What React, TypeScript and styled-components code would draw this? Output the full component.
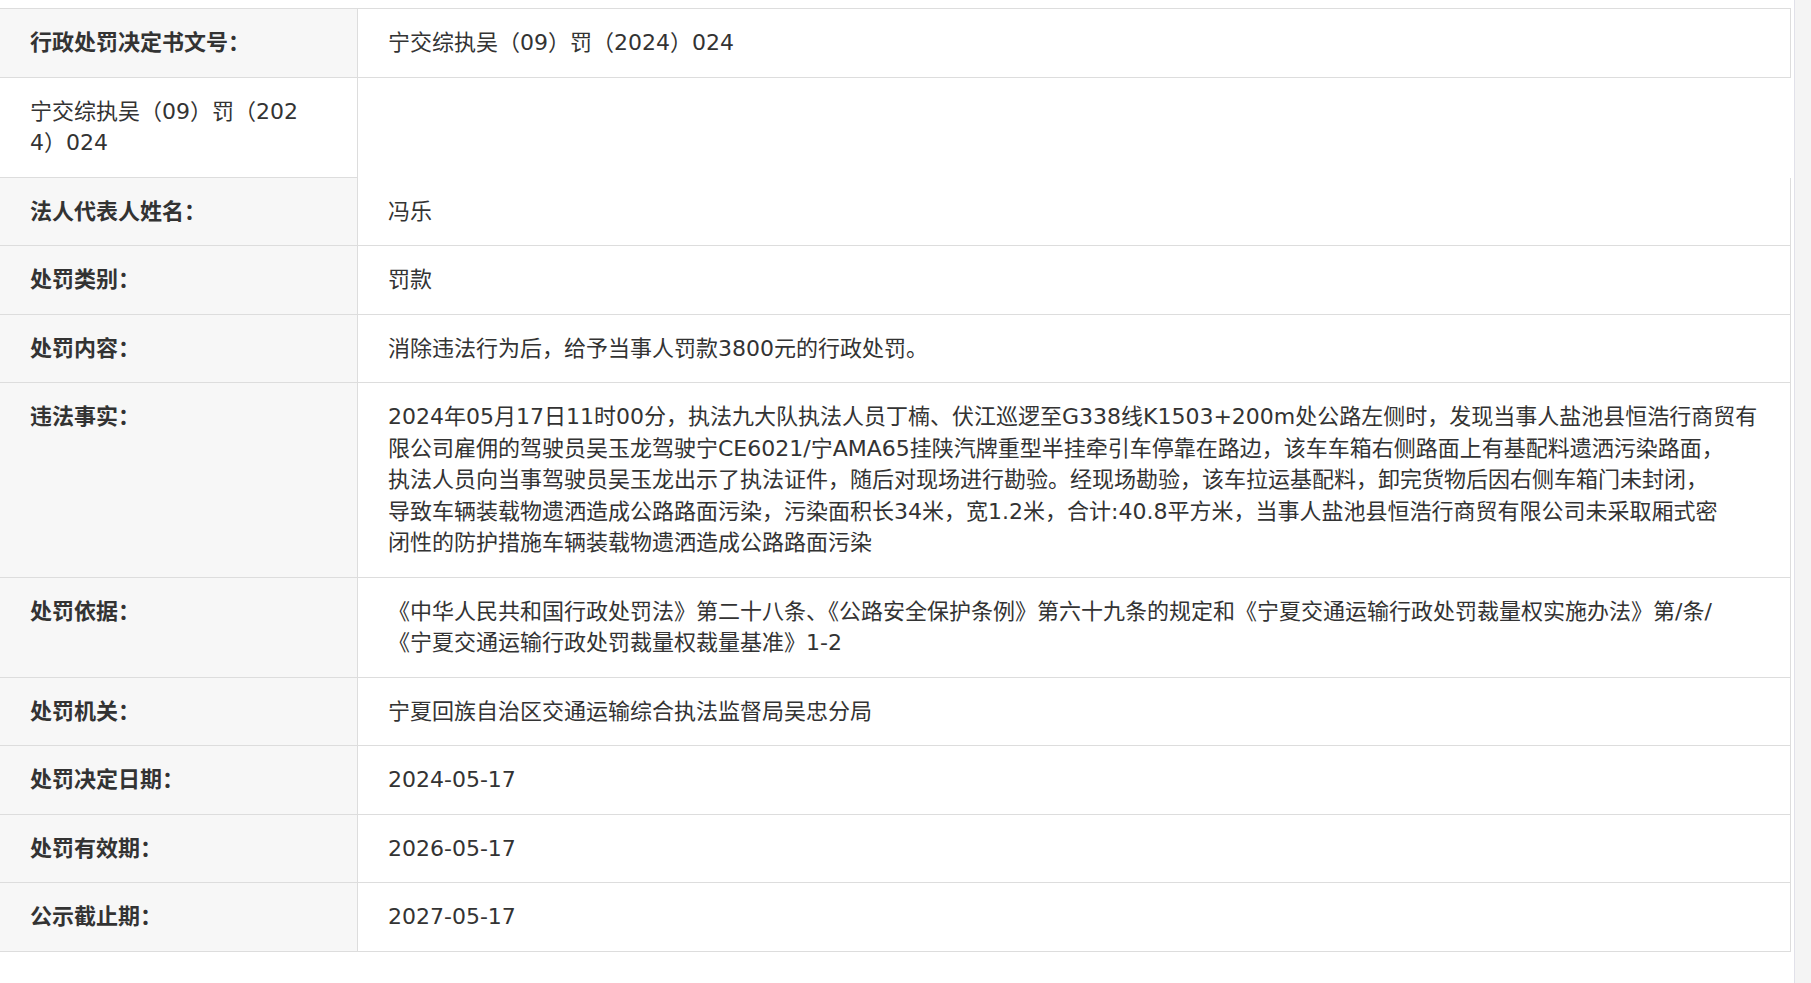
import React from "react";
import styled, { createGlobalStyle } from "styled-components";

const GlobalStyle = createGlobalStyle`
  html, body {
    margin: 0;
    padding: 0;
    background: #ffffff;
  }
  body {
    font-family: "DejaVu Sans", "Noto Sans CJK SC", sans-serif;
    color: #333333;
  }
`;

const Page = styled.div`
  display: flex;
  min-height: 100vh;
`;

const Main = styled.main`
  flex: 1;
  min-width: 0;
  padding: 8px 3px 0 0;
`;

const ScrollTrack = styled.div`
  flex: none;
  width: 16px;
  background: #f4f4f4;
  border-left: 1px solid #e1e1e9;
`;

const Table = styled.table`
  width: 100%;
  table-layout: fixed;
  border-collapse: separate;
  border-spacing: 0;
  border-top: 1px solid #dddddd;
  font-size: 22px;
  line-height: 31.5px;
`;

const LabelCell = styled.th`
  width: 297px;
  padding: 18px 30px;
  text-align: left;
  vertical-align: top;
  font-weight: 700;
  color: #333333;
  background: #f7f7f7;
  border-right: 1px solid #dddddd;
  border-bottom: 1px solid #dddddd;
`;

const ValueCell = styled.td`
  padding: 18px 30px;
  text-align: left;
  vertical-align: top;
  font-weight: 400;
  color: #333333;
  background: #ffffff;
  border-right: 1px solid #dddddd;
  border-bottom: 1px solid #dddddd;
`;

const Line = styled.span`
  display: block;
  white-space: nowrap;
`;

type Row =
  | { kind: "pair"; label: string; lines: string[] }
  | { kind: "orphan"; lines: string[] };

const rows: Row[] = [
  { kind: "pair", label: "行政处罚决定书文号：", lines: ["宁交综执吴（09）罚（2024）024"] },
  { kind: "orphan", lines: ["宁交综执吴（09）罚（202", "4）024"] },
  { kind: "pair", label: "法人代表人姓名：", lines: ["冯乐"] },
  { kind: "pair", label: "处罚类别：", lines: ["罚款"] },
  { kind: "pair", label: "处罚内容：", lines: ["消除违法行为后，给予当事人罚款3800元的行政处罚。"] },
  {
    kind: "pair",
    label: "违法事实：",
    lines: [
      "2024年05月17日11时00分，执法九大队执法人员丁楠、伏江巡逻至G338线K1503+200m处公路左侧时，发现当事人盐池县恒浩行商贸有",
      "限公司雇佣的驾驶员吴玉龙驾驶宁CE6021/宁AMA65挂陕汽牌重型半挂牵引车停靠在路边，该车车箱右侧路面上有基配料遗洒污染路面，",
      "执法人员向当事驾驶员吴玉龙出示了执法证件，随后对现场进行勘验。经现场勘验，该车拉运基配料，卸完货物后因右侧车箱门未封闭，",
      "导致车辆装载物遗洒造成公路路面污染，污染面积长34米，宽1.2米，合计:40.8平方米，当事人盐池县恒浩行商贸有限公司未采取厢式密",
      "闭性的防护措施车辆装载物遗洒造成公路路面污染",
    ],
  },
  {
    kind: "pair",
    label: "处罚依据：",
    lines: [
      "《中华人民共和国行政处罚法》第二十八条、《公路安全保护条例》第六十九条的规定和《宁夏交通运输行政处罚裁量权实施办法》第/条/",
      "《宁夏交通运输行政处罚裁量权裁量基准》1-2",
    ],
  },
  { kind: "pair", label: "处罚机关：", lines: ["宁夏回族自治区交通运输综合执法监督局吴忠分局"] },
  { kind: "pair", label: "处罚决定日期：", lines: ["2024-05-17"] },
  { kind: "pair", label: "处罚有效期：", lines: ["2026-05-17"] },
  { kind: "pair", label: "公示截止期：", lines: ["2027-05-17"] },
];

const Lines: React.FC<{ lines: string[] }> = ({ lines }) => (
  <>
    {lines.map((l, i) => (
      <Line key={i}>{l}</Line>
    ))}
  </>
);

export default function App() {
  return (
    <>
      <GlobalStyle />
      <Page>
        <Main>
          <Table>
            <tbody>
              {rows.map((row, i) =>
                row.kind === "pair" ? (
                  <tr key={i}>
                    <LabelCell scope="row">{row.label}</LabelCell>
                    <ValueCell>
                      <Lines lines={row.lines} />
                    </ValueCell>
                  </tr>
                ) : (
                  <tr key={i}>
                    <ValueCell>
                      <Lines lines={row.lines} />
                    </ValueCell>
                  </tr>
                )
              )}
            </tbody>
          </Table>
        </Main>
        <ScrollTrack />
      </Page>
    </>
  );
}
